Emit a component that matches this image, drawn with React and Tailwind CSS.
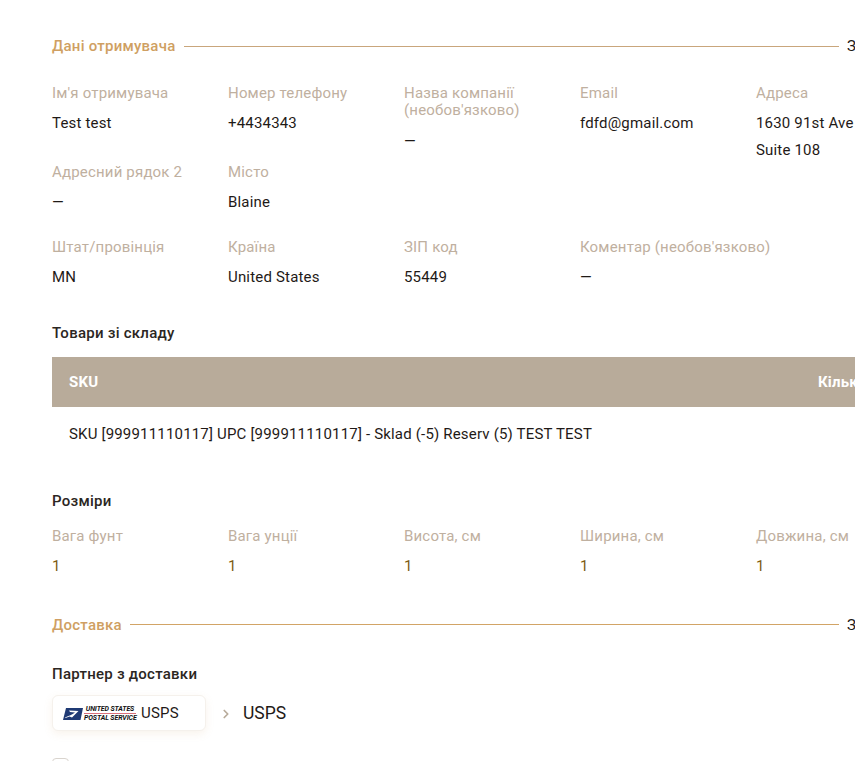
import { ChevronRight } from 'lucide-react';

const text15 = 'text-[15px] tracking-[0.18px]';
const title15 = 'text-[15px] tracking-[0.25px]';

function SectionTitle({ title, lineColor = 'bg-[#c9a67c]' }) {
  return (
    <div className="flex items-center gap-2 h-[20px]">
      <span className={`${title15} leading-[20px] font-medium text-[#cf9f62] whitespace-nowrap`}>{title}</span>
      <span className={`flex-1 h-px ${lineColor}`} />
      <span className="w-[32px] text-[15px] leading-[20px] text-[#1f1a17] whitespace-nowrap">З</span>
    </div>
  );
}

function Field({ label, value, valueClass = 'text-[#1f1a17]' }) {
  return (
    <div className="w-[176px] pr-2 shrink-0">
      <div className={`${text15} leading-[17px] mb-2 text-[#bfb0a0]`}>{label}</div>
      <div className={`${text15} leading-[27px] whitespace-nowrap ${valueClass}`}>{value}</div>
    </div>
  );
}

function UspsLogo() {
  return (
    <div className="flex items-center gap-[1px] w-[73px] shrink-0">
      <svg width="20" height="12" viewBox="0 0 20 12" className="shrink-0">
        <path d="M3 0H20L17.5 12H0Z" fill="#1f3a74" />
        <path d="M2 9.5C6 8 9 6.5 12 4.5L7 4L6 2.5L15.5 3L9 9.5L6.5 8.5L2.5 10Z" fill="#fff" />
      </svg>
      <div className="w-[52px] flex flex-col items-stretch text-[7px] leading-[6.5px] font-bold italic text-[#111] whitespace-nowrap tracking-[-0.1px]">
        <span className="border-b border-[#d9707c] pb-px text-center">UNITED STATES</span>
        <span className="text-center pt-px">POSTAL SERVICE</span>
      </div>
    </div>
  );
}

export default function App() {
  return (
    <div className="h-[761px] w-full overflow-hidden bg-white font-['Roboto',sans-serif]">
      <div className="w-[827px] ml-[52px] pt-[36px]">
        <SectionTitle title="Дані отримувача" />

        <div className="flex mt-[28.5px]">
          <Field label="Ім'я отримувача" value="Test test" />
          <Field label="Номер телефону" value="+4434343" />
          <Field label="Назва компанії (необов'язково)" value="—" valueClass="text-[#1f1a17] pt-px" />
          <Field label="Email" value="fdfd@gmail.com" />
          <div className="w-[176px] shrink-0">
            <div className={`${text15} leading-[17px] mb-2 text-[#bfb0a0]`}>Адреса</div>
            <div className={`${text15} leading-[27px] whitespace-nowrap text-[#1f1a17]`}>
              1630 91st Ave NE
              <br />
              Suite 108
            </div>
          </div>
        </div>

        <div className="flex">
          <Field label="Адресний рядок 2" value="—" />
          <Field label="Місто" value="Blaine" />
        </div>

        <div className="flex mt-[23px]">
          <Field label="Штат/провінція" value="MN" />
          <Field label="Країна" value="United States" />
          <Field label="ЗІП код" value="55449" />
          <div className="w-[352px] shrink-0">
            <div className={`${text15} leading-[17px] mb-2 text-[#bfb0a0]`}>Коментар (необов'язково)</div>
            <div className={`${text15} leading-[27px] text-[#1f1a17]`}>—</div>
          </div>
        </div>

        <div className={`mt-[32px] ${title15} leading-[20px] font-medium text-[#2b2622]`}>Товари зі складу</div>

        <div className={`mt-[14px] h-[50px] pt-[2px] bg-[#b8ab9a] flex items-center justify-between pl-[17px] pr-[11px] ${text15} font-bold text-white`}>
          <span>SKU</span>
          <span className="w-[50px] whitespace-nowrap">Кількість</span>
        </div>
        <div className={`h-[54px] pt-[2px] flex items-center pl-[17px] ${text15} text-[#1f1a17]`}>
          SKU [999911110117] UPC [999911110117] - Sklad (-5) Reserv (5) TEST TEST
        </div>

        <div className={`mt-[30px] ${title15} leading-[20px] font-medium text-[#2b2622]`}>Розміри</div>

        <div className="flex mt-[17px]">
          <Field label="Вага фунт" value="1" valueClass="text-[#7d5c12]" />
          <Field label="Вага унції" value="1" valueClass="text-[#7d5c12]" />
          <Field label="Висота, см" value="1" valueClass="text-[#7d5c12]" />
          <Field label="Ширина, см" value="1" valueClass="text-[#7d5c12]" />
          <Field label="Довжина, см" value="1" valueClass="text-[#7d5c12]" />
        </div>

        <div className="mt-[35px]">
          <SectionTitle title="Доставка" lineColor="bg-[#d2a466]" />
        </div>

        <div className={`mt-[29px] ${title15} leading-[20px] font-medium text-[#2b2622]`}>Партнер з доставки</div>

        <div className="mt-[11px] flex items-center">
          <div className="w-[154px] h-[36px] pt-[2px] rounded-md border border-[#f5f1ec] bg-white shadow-[0_3px_8px_rgba(207,159,98,0.12)] flex items-center pl-[10px] gap-[5px]">
            <UspsLogo />
            <span className={`${text15} text-[#1f1a17]`}>USPS</span>
          </div>
          <ChevronRight className="ml-[13px] mt-[2px] text-[#b8ab9a]" size={14} strokeWidth={3} />
          <span className="ml-[10px] pt-[2px] text-[17.5px] text-[#1f1a17]">USPS</span>
        </div>

        <div className="mt-[27px] w-[17px] h-[17px] rounded-[4px] border border-[#d9d4ce] bg-white" />
      </div>
    </div>
  );
}
